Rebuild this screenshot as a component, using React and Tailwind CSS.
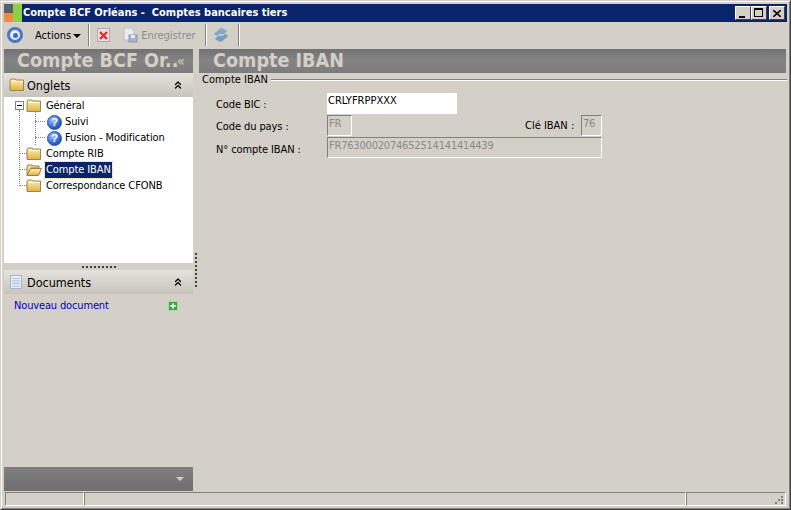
import { ChevronsUp, Plus } from "lucide-react";

const FONT = "font-['DejaVu_Sans_Condensed','Noto_Sans',sans-serif]";

function Folder({ open }) {
  return (
    <svg width="16" height="14" viewBox="0 0 16 14" className="shrink-0">
      <defs>
        <linearGradient id="fold" x1="0" y1="0" x2="0" y2="1">
          <stop offset="0" stopColor="#fff2b8" />
          <stop offset="1" stopColor="#e0b040" />
        </linearGradient>
      </defs>
      {open ? (
        <>
          <path d="M1 3 L2 2 H6 L7 3 H13 V5 H5 L1 12 Z" fill="#f2dc90" stroke="#a08040" />
          <path d="M1 12.5 L4.5 5.5 H15.5 L12.5 12.5 Z" fill="url(#fold)" stroke="#a08040" />
        </>
      ) : (
        <>
          <path d="M1 2 L2 1 H6 L7 2 H14.5 V12.5 H1 Z" fill="url(#fold)" stroke="#9a8650" />
          <path d="M2 3.5 H14" stroke="#fff8d8" />
        </>
      )}
    </svg>
  );
}

function Help() {
  return (
    <span className="w-[15px] h-[15px] -mr-[1px] shrink-0 rounded-full bg-[radial-gradient(circle_at_35%_30%,#9cc4f4,#1f55c8_70%)] border border-[#2a4fa8] text-white text-[11px] font-bold leading-[13px] text-center font-['Liberation_Sans',sans-serif]">
      ?
    </span>
  );
}

function TreeRow({ indent, icon, label, selected }) {
  return (
    <div className="h-4 flex items-center gap-[3px]" style={{ paddingLeft: indent }}>
      {icon}
      <span className={selected ? "bg-[#0a246a] text-white px-[1px] outline-1 outline-dotted outline-[#f0d080]" : "px-[1px]"}>
        {label}
      </span>
    </div>
  );
}

function PanelHeader({ icon, label }) {
  return (
    <div className="h-6 flex items-center pl-[5px] pr-[9px] bg-gradient-to-b from-[#e6e3dd] to-[#c8c4bc]">
      <div className="w-[14px] shrink-0">{icon}</div>
      <span className="ml-[4px] pt-[2px] text-[12.5px] flex-1">{label}</span>
      <ChevronsUp size={12} strokeWidth={2.5} className="text-black" />
    </div>
  );
}

function FieldLabel({ children, className }) {
  return <span className={`w-[111px] shrink-0 text-[11px] tracking-[-0.1px] ${className}`}>{children}</span>;
}

function DisabledInput({ className, children }) {
  return (
    <div className={`h-[21px] border border-t-[#808080] border-l-[#808080] border-r-white border-b-white text-[11px] leading-[15px] tracking-[-0.2px] text-[#8a8a86] pl-[1px] ${className}`}>
      {children}
    </div>
  );
}

export default function App() {
  return (
    <div className={`w-[791px] h-[510px] overflow-hidden bg-[#d4d0c8] text-black text-[11px] ${FONT}`}>
      <div className="h-full border border-t-[#d4d0c8] border-l-[#d4d0c8] border-r-[#404040] border-b-[#404040]">
        <div className="h-full border border-t-white border-l-white border-r-[#808080] border-b-[#808080] p-[2px] flex flex-col">
          {/* barre de titre */}
          <div className="h-[18px] shrink-0 bg-[#0a246a] flex items-center pr-[2px]">
            <div className="w-[18px] h-[18px] grid grid-cols-2 grid-rows-2 shrink-0">
              <div className="bg-[#58606a]" />
              <div className="bg-[#8ccf48] row-span-2" />
              <div className="bg-[#ef8a4a]" />
            </div>
            <span className="ml-[1px] flex-1 text-white text-[11px] font-bold whitespace-pre">Compte BCF Orléans -  Comptes bancaires tiers</span>
            <div className="flex items-center">
              {["min", "max"].map((k) => (
                <div key={k} className="w-4 h-[14px] bg-[#d4d0c8] border border-t-white border-l-white border-r-[#404040] border-b-[#404040] relative">
                  {k === "min" ? (
                    <div className="absolute left-[3px] bottom-[1px] w-[6px] h-[2px] bg-black" />
                  ) : (
                    <div className="absolute left-[2px] top-[1px] w-[9px] h-[9px] border border-t-2 border-black" />
                  )}
                </div>
              ))}
              <div className="ml-[2px] w-4 h-[14px] bg-[#d4d0c8] border border-t-white border-l-white border-r-[#404040] border-b-[#404040] flex items-center justify-center">
                <svg width="8" height="7" viewBox="0 0 8 7">
                  <path d="M0 0 L8 7 M8 0 L0 7" stroke="#000" strokeWidth="1.6" />
                </svg>
              </div>
            </div>
          </div>

          {/* barre d'outils */}
          <div className="h-[26px] shrink-0 flex items-center">
            <div className="w-4 h-4 ml-[3px] rounded-full border-[3px] border-[#4a78c8] flex items-center justify-center bg-[#e8eef8]">
              <div className="w-[5px] h-[5px] rounded-full bg-[#3a68c0]" />
            </div>
            <span className="ml-[12px] pt-[2px] text-[11px]">Actions</span>
            <div className="ml-[2px] mt-[2px] w-0 h-0 border-x-[4px] border-x-transparent border-t-[4px] border-t-black" />
            <div className="ml-[7px] h-[22px] w-[2px] border-l border-l-[#808080] border-r border-r-white" />
            <div className="ml-[7px] w-[13px] h-[14px] bg-[#f0dcdc] border border-[#b0a8b8] flex items-center justify-center">
              <svg width="9" height="9" viewBox="0 0 9 9">
                <path d="M1 1 L8 8 M8 1 L1 8" stroke="#d83030" strokeWidth="2.4" />
              </svg>
            </div>
            <svg width="16" height="16" viewBox="0 0 16 16" className="ml-[12px]">
              <path d="M2 1 H9 L12 4 V13 H2 Z" fill="#e8ecf4" stroke="#b8c0d0" />
              <rect x="7" y="8" width="8" height="7" fill="#a8b4cc" stroke="#8c98b4" />
              <rect x="9" y="8" width="4" height="3" fill="#e8ecf4" />
            </svg>
            <span className="ml-[3px] pt-[2px] text-[11px] text-[#8e8e8a]">Enregistrer</span>
            <div className="ml-[9px] h-[22px] w-[2px] border-l border-l-[#808080] border-r border-r-white" />
            <svg width="18" height="18" viewBox="0 0 18 18" className="ml-[5px]">
              <path d="M2 8 L9 2 L15 5 L12 8 H7 L5 10 Z" fill="#7fa8d4" stroke="#a0a8b0" strokeWidth="0.6" />
              <path d="M16 10 L9 16 L3 13 L6 10 H11 L13 8 Z" fill="#6f9ccc" stroke="#a0a8b0" strokeWidth="0.6" />
            </svg>
            <div className="ml-[8px] h-[22px] w-[2px] border-l border-l-[#808080] border-r border-r-white" />
          </div>

          {/* contenu */}
          <div className="flex-1 flex min-h-0 pt-[1px]">
            <div className="w-[189px] shrink-0 flex flex-col">
              <div className="h-6 shrink-0 bg-gradient-to-b from-[#727272] via-[#848484] to-[#7c7c7c] flex items-center pl-[13px] text-[#d4d0c8] font-bold">
                <span className="w-[160px] shrink-0 text-[19.6px] leading-6 whitespace-nowrap">Compte BCF Or..</span>
                <span className="text-[14px] font-normal leading-6">«</span>
              </div>
              <PanelHeader icon={<Folder />} label="Onglets" />
              <div className="h-[166px] shrink-0 bg-white relative pt-[1px] text-[11px] tracking-[-0.1px]">
                {/* pointillés de l'arbre */}
                <div className="absolute left-[15px] top-[13px] h-[76px] border-l border-dotted border-[#808080]" />
                <div className="absolute left-[31px] top-[15px] h-[33px] border-l border-dotted border-[#808080]" />
                <div className="absolute left-[15px] top-[56px] w-[8px] border-t border-dotted border-[#808080]" />
                <div className="absolute left-[15px] top-[72px] w-[8px] border-t border-dotted border-[#808080]" />
                <div className="absolute left-[15px] top-[88px] w-[8px] border-t border-dotted border-[#808080]" />
                <div className="absolute left-[31px] top-[24px] w-[10px] border-t border-dotted border-[#808080]" />
                <div className="absolute left-[31px] top-[40px] w-[10px] border-t border-dotted border-[#808080]" />
                <div className="absolute left-[11px] top-[4px] w-[9px] h-[9px] bg-white border border-[#808080] flex items-center justify-center">
                  <div className="w-[5px] h-[1px] bg-black" />
                </div>
                <TreeRow indent={22} icon={<Folder />} label="Général" />
                <TreeRow indent={43} icon={<Help />} label="Suivi" />
                <TreeRow indent={43} icon={<Help />} label="Fusion - Modification" />
                <TreeRow indent={22} icon={<Folder />} label="Compte RIB" />
                <TreeRow indent={22} icon={<Folder open />} label="Compte IBAN" selected />
                <TreeRow indent={22} icon={<Folder />} label="Correspondance CFONB" />
              </div>
              <div className="h-[7px] shrink-0 flex items-center justify-center">
                <div className="w-[34px] border-t-2 border-dotted border-[#404040]" />
              </div>
              <PanelHeader
                icon={
                  <svg width="14" height="16" viewBox="0 0 14 16" className="shrink-0">
                    <path d="M1.5 1.5 H12.5 V14.5 H1.5 Z" fill="#e8eefa" stroke="#9fb4d8" />
                    <path d="M3 4.5 H11 M3 7 H11 M3 9.5 H11 M3 12 H11" stroke="#a8bce0" />
                  </svg>
                }
                label="Documents"
              />
              <div className="flex items-center h-[22px] pl-[10px] pr-[15px]">
                <span className="flex-1 pt-[2px] text-[#0000c0] text-[11px] tracking-[-0.15px]">Nouveau document</span>
                <div className="w-[10px] h-[10px] mt-[1px] bg-[#3ca83c] flex items-center justify-center border border-[#a8d8a8]">
                  <Plus size={8} strokeWidth={4} className="text-white" />
                </div>
              </div>
              <div className="flex-1" />
              <div className="h-6 shrink-0 bg-gradient-to-b from-[#808080] to-[#6e6e6e] flex items-center justify-end pr-[9px]">
                <div className="w-0 h-0 border-x-[4px] border-x-transparent border-t-[4px] border-t-[#d4d0c8]" />
              </div>
            </div>

            {/* séparateur */}
            <div className="w-[6px] shrink-0 flex justify-center pt-[204px]">
              <div className="h-[34px] border-l-2 border-dotted border-[#404040]" />
            </div>

            {/* zone principale */}
            <div className="flex-1 min-w-0 flex flex-col">
              <div className="h-6 shrink-0 mr-[1px] bg-gradient-to-b from-[#727272] via-[#848484] to-[#7c7c7c] flex items-center pl-[14px] text-[#d4d0c8] font-bold text-[19.6px]">
                Compte IBAN
              </div>
              <div className="flex items-center h-[13px] pl-[3px] text-[11px] leading-none">
                <span>Compte IBAN</span>
                <div className="flex-1 ml-[3px] h-[2px] border-t border-t-[#808080] border-b border-b-white" />
              </div>
              <div className="pl-[17px] mt-[7px] w-[420px]">
                <div className="flex items-center h-[21px]">
                  <FieldLabel className="pt-[4px]">Code BIC :</FieldLabel>
                  <div className="w-[130px] h-[21px] bg-white text-[11px] leading-[15px] pl-[1px]">CRLYFRPPXXX</div>
                </div>
                <div className="flex items-center h-[21px] mt-[1px]">
                  <FieldLabel className="pt-[4px]">Code du pays :</FieldLabel>
                  <DisabledInput className="w-[25px]">FR</DisabledInput>
                  <span className="ml-[173px] w-[56px] pt-[2px] text-[11px] whitespace-nowrap">Clé IBAN :</span>
                  <DisabledInput className="w-[21px]">76</DisabledInput>
                </div>
                <div className="flex items-center h-[21px] mt-[1px]">
                  <FieldLabel className="pt-[5px]">N° compte IBAN :</FieldLabel>
                  <DisabledInput className="w-[275px]">FR7630002074652514141414439</DisabledInput>
                </div>
              </div>
            </div>
          </div>

          {/* barre d'état */}
          <div className="h-[14px] shrink-0 mt-[1px] ml-[1px] mr-[1px] flex">
            <div className="w-[79px] border border-t-[#808080] border-l-[#808080] border-r-white border-b-white" />
            <div className="w-[602px] border border-t-[#808080] border-l-[#808080] border-r-white border-b-white" />
            <div className="flex-1 border border-t-[#808080] border-l-[#808080] border-r-white border-b-white flex items-end justify-end pr-[1px]">
              <svg width="10" height="10" viewBox="0 0 10 10">
                <path d="M7 1 h2 v2 h-2 Z M4 4 h2 v2 h-2 Z M7 4 h2 v2 h-2 Z M1 7 h2 v2 h-2 Z M7 7 h2 v2 h-2 Z" fill="#808080" />
              </svg>
            </div>
          </div>
        </div>
      </div>
    </div>
  );
}
